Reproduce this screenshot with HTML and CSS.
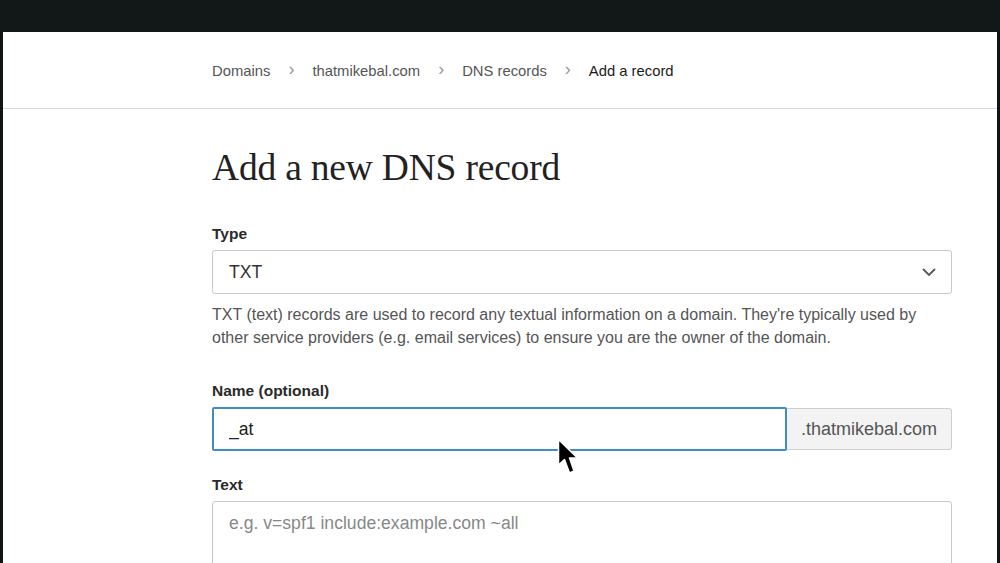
FILE: index.html
```html
<!DOCTYPE html>
<html lang="en">

<head>
    <meta charset="UTF-8">
    <meta name="viewport" content="width=device-width, initial-scale=1.0">
    <title>Add a record</title>
    <link rel="stylesheet" href="styles.css">
</head>

<body>
    <div class="topbar"></div>
    <div class="page">
        <!-- breadcrumb -->
        <header class="crumbs">
            <a href="#">Domains</a>
            <span class="sep">&#8250;</span>
            <a href="#">thatmikebal.com</a>
            <span class="sep">&#8250;</span>
            <a href="#">DNS records</a>
            <span class="sep">&#8250;</span>
            <span class="current">Add a record</span>
        </header>

        <main class="form">
            <h1>Add a new DNS record</h1>

            <div class="field">
                <label>Type</label>
                <div class="select">
                    <span>TXT</span>
                    <svg width="16" height="10" viewBox="0 0 16 10"><path d="M2 2 L8 8 L14 2" fill="none" stroke="#555" stroke-width="1.8"/></svg>
                </div>
                <p class="help">TXT (text) records are used to record any textual information on a domain. They're typically used by other service providers (e.g. email services) to ensure you are the owner of the domain.</p>
            </div>

            <div class="field">
                <label>Name (optional)</label>
                <div class="group">
                    <input type="text" value="_at">
                    <span class="suffix">.thatmikebal.com</span>
                </div>
            </div>

            <div class="field">
                <label>Text</label>
                <textarea placeholder="e.g. v=spf1 include:example.com ~all"></textarea>
            </div>
        </main>

        <svg class="pointer" width="24" height="40" viewBox="0 0 24 40">
            <path d="M1.5 1.5 L1.5 27 L7.5 21.5 L12.5 35 L17 33 L12.5 20 L20.5 20 Z" fill="#000" stroke="#fff" stroke-width="1.5" stroke-linejoin="round"/>
        </svg>
    </div>
</body>

</html>
```

FILE: styles.css
```css
html,
body {
    margin: 0;
    padding: 0;
    height: 100%;
    overflow: hidden;
}

body {
    background-color: #0f1414;
    font-family: "Liberation Sans", Arial, sans-serif;
    color: #222;
}

.topbar {
    height: 32px;
    background-color: #121717;
}

.page {
    position: relative;
    margin: 0 3px;
    height: 531px;
    background-color: #fff;
    overflow: hidden;
}

.crumbs {
    display: flex;
    align-items: center;
    height: 75px;
    padding: 1px 0 0 209px;
    border-bottom: 1px solid #dcdcdc;
    font-size: 14.8px;
}

.crumbs a {
    color: #555;
    text-decoration: none;
}

.crumbs .sep {
    color: #999;
    font-size: 18px;
    margin: -3px 18px 0 18px;
}

.crumbs .current {
    color: #1a1a1a;
}

.form {
    width: 740px;
    margin-left: 209px;
}

.form h1 {
    font-family: "Liberation Serif", "Times New Roman", serif;
    font-weight: normal;
    font-size: 37.5px;
    color: #222;
    margin: 37px 0 36px 0;
    letter-spacing: -0.2px;
}

.field label {
    display: block;
    font-size: 15.5px;
    font-weight: bold;
    color: #2a2a2a;
    margin-bottom: 7px;
}

.select {
    display: flex;
    justify-content: space-between;
    align-items: center;
    height: 42px;
    padding: 0 14px 0 16px;
    border: 1px solid #c8c8c8;
    border-radius: 3px;
    font-size: 17.6px;
    color: #333;
}

.help {
    font-size: 16px;
    line-height: 23px;
    color: #555;
    margin: 9px 0 33px 0;
}

.group {
    display: flex;
    height: 44px;
    margin-bottom: 25px;
}

.group input {
    flex: 1;
    height: 44px;
    box-sizing: border-box;
    border: 2px solid #3f8dc3;
    border-radius: 2px;
    padding: 0 15px;
    font-family: "Liberation Sans", Arial, sans-serif;
    font-size: 17.6px;
    color: #222;
    outline: none;
}

.suffix {
    display: flex;
    align-items: center;
    width: 136px;
    padding: 0 14px;
    margin-top: 1px;
    height: 40px;
    background-color: #f3f3f3;
    border: 1px solid #cfcfcf;
    border-left: none;
    border-radius: 0 3px 3px 0;
    font-size: 18px;
    color: #555;
}

.field textarea {
    display: block;
    width: 100%;
    box-sizing: border-box;
    height: 100px;
    border: 1px solid #c8c8c8;
    border-radius: 3px;
    padding: 11px 16px;
    font-family: "Liberation Sans", Arial, sans-serif;
    font-size: 17.6px;
    resize: none;
}

.field textarea::placeholder {
    color: #888;
}

.pointer {
    position: absolute;
    left: 554px;
    top: 406px;
}
```
